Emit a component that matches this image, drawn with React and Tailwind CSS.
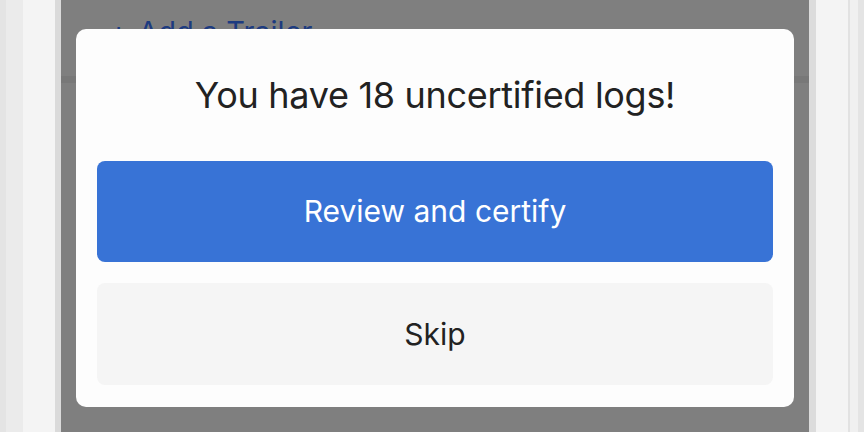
import React from 'react';

const font = { fontFamily: 'Inter, "Noto Sans", sans-serif' };

const App = () => {
  return (
    <div className="w-[864px] h-[432px] flex overflow-hidden bg-white" style={font}>
      {/* left edge of the screen behind */}
      <div className="flex h-full w-[61px] shrink-0">
        <div className="w-[6px] bg-[#e4e4e4]" />
        <div className="w-[17px] bg-[#ebebeb]" />
        <div className="w-[32px] bg-[#f4f4f4]" />
        <div className="w-[6px] bg-[#dadada]" />
      </div>

      {/* dimmed page + dialog */}
      <div className="relative flex-1 h-full bg-[#7f7f7f] flex flex-col">
        <div className="flex items-center gap-[10px] pl-[48px] pt-[17px] text-[#1d3b80] text-[29px] leading-none">
          <span>+</span>
          <span>Add a Trailer</span>
        </div>
        <div className="mt-[30px] h-[7px] bg-[#787878]" />

        <div className="absolute left-[15px] top-[29px] w-[718px] h-[378px] bg-[#fdfdfd] rounded-[10px] flex flex-col px-[21px] pb-[22px]">
          <div className="h-[132px] flex items-center justify-center text-[#222222] text-[36px] tracking-[-0.3px]">
            You have 18 uncertified logs!
          </div>
          <button className="h-[101px] rounded-[8px] bg-[#3873d6] text-white text-[30px] flex items-center justify-center">
            Review and certify
          </button>
          <button className="mt-[21px] h-[102px] rounded-[8px] bg-[#f5f5f5] text-[#222222] text-[30px] flex items-center justify-center">
            Skip
          </button>
        </div>
      </div>

      {/* right edge of the screen behind */}
      <div className="flex h-full w-[55px] shrink-0">
        <div className="w-[7px] bg-[#dcdcdc]" />
        <div className="w-[32px] bg-[#f4f4f4]" />
        <div className="w-[2px] bg-[#e2e2e2]" />
        <div className="w-[8px] bg-[#f0f0f0]" />
        <div className="w-[6px] bg-[#e4e4e4]" />
      </div>
    </div>
  );
};

export default App;
